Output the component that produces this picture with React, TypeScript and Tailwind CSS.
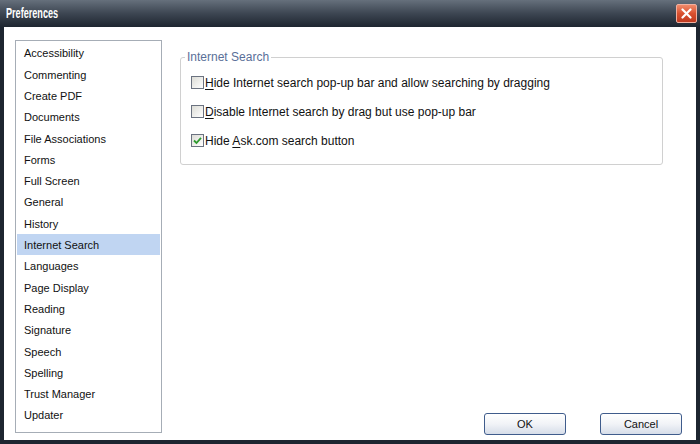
import React from 'react'

const items = [
  'Accessibility',
  'Commenting',
  'Create PDF',
  'Documents',
  'File Associations',
  'Forms',
  'Full Screen',
  'General',
  'History',
  'Internet Search',
  'Languages',
  'Page Display',
  'Reading',
  'Signature',
  'Speech',
  'Spelling',
  'Trust Manager',
  'Updater',
]

const font = { fontFamily: '"Liberation Sans", Arial, sans-serif' }

function CheckBox({ checked }: { checked?: boolean }): React.ReactElement {
  return (
    <div className="w-[13px] h-[13px] border border-[#6b7280] bg-gradient-to-br from-[#dcdcd6] to-[#ffffff] flex items-center justify-center shrink-0">
      {checked && (
        <svg width="9" height="9" viewBox="0 0 9 9">
          <path d="M1 4.5 L3.5 7 L8 1.8" stroke="#2f9a2f" strokeWidth="1.8" fill="none" />
        </svg>
      )}
    </div>
  )
}

function Option({ pre, key1, post, checked }: { pre?: string; key1: string; post: string; checked?: boolean }): React.ReactElement {
  return (
    <div className="flex items-center h-[29px]">
      <CheckBox checked={checked} />
      <span className="ml-[1px] text-[12px] text-[#111] whitespace-nowrap">
        {pre}
        <span className="underline underline-offset-2">{key1}</span>
        {post}
      </span>
    </div>
  )
}

export default function App(): React.ReactElement {
  return (
    <div className="w-[700px] h-[444px] bg-[#1d2530] flex flex-col px-[4px] pb-[4px] overflow-hidden" style={font}>
      {/* Title bar */}
      <div className="h-[27px] -mx-[4px] px-[6px] flex items-center justify-between bg-gradient-to-b from-[#66707c] via-[#3d4652] to-[#1e2630]">
        <span className="text-white font-bold text-[14px] scale-x-[0.65] origin-left">Preferences</span>
        <div className="w-[21px] h-[19px] mr-[-3px] rounded-[2px] border border-[#f0b0a0] bg-gradient-to-b from-[#f08a6a] via-[#d9502f] to-[#c03a20] flex items-center justify-center">
          <svg width="11" height="11" viewBox="0 0 11 11">
            <path d="M1.5 1.5 L9.5 9.5 M9.5 1.5 L1.5 9.5" stroke="white" strokeWidth="2.2" strokeLinecap="round" />
          </svg>
        </div>
      </div>

      {/* Client */}
      <div className="flex-1 bg-white flex pt-[13px] pl-[11px] pr-[14px] pb-[5px]">
        <div className="w-[147px] h-[393px] border border-[#a6adb6] pt-[1px] px-[1px] shrink-0">
          {items.map((it) => (
            <div
              key={it}
              className={`h-[21.3px] flex items-center pl-[7px] pt-[2px] text-[11px] text-[#111] ${it === 'Internet Search' ? 'bg-[#c0d5f2]' : ''}`}
            >
              {it}
            </div>
          ))}
        </div>

        <div className="flex-1 flex flex-col ml-[18px]">
          <fieldset className="w-[483px] h-[117px] mt-[8px] border border-[#d0d0d0] rounded-[3px] pl-[10px] pt-[2px]">
            <legend className="ml-[-6px] px-[2px] text-[12px] text-[#5a6f98]">Internet Search</legend>
            <Option key1="H" post="ide Internet search pop-up bar and allow searching by dragging" />
            <Option key1="D" post="isable Internet search by drag but use pop-up bar" />
            <Option pre="Hide " key1="A" post="sk.com search button" checked />
          </fieldset>

          <div className="mt-auto flex justify-end gap-[34px]">
            <button className="w-[82px] h-[22px] rounded-[3px] border border-[#3f5c8c] bg-gradient-to-b from-[#ffffff] via-[#f1f3f7] to-[#d6dde9] text-[11px] text-[#111]">
              OK
            </button>
            <button className="w-[82px] h-[22px] rounded-[3px] border border-[#3f5c8c] bg-gradient-to-b from-[#ffffff] via-[#f1f3f7] to-[#d6dde9] text-[11px] text-[#111]">
              Cancel
            </button>
          </div>
        </div>
      </div>
    </div>
  )
}
